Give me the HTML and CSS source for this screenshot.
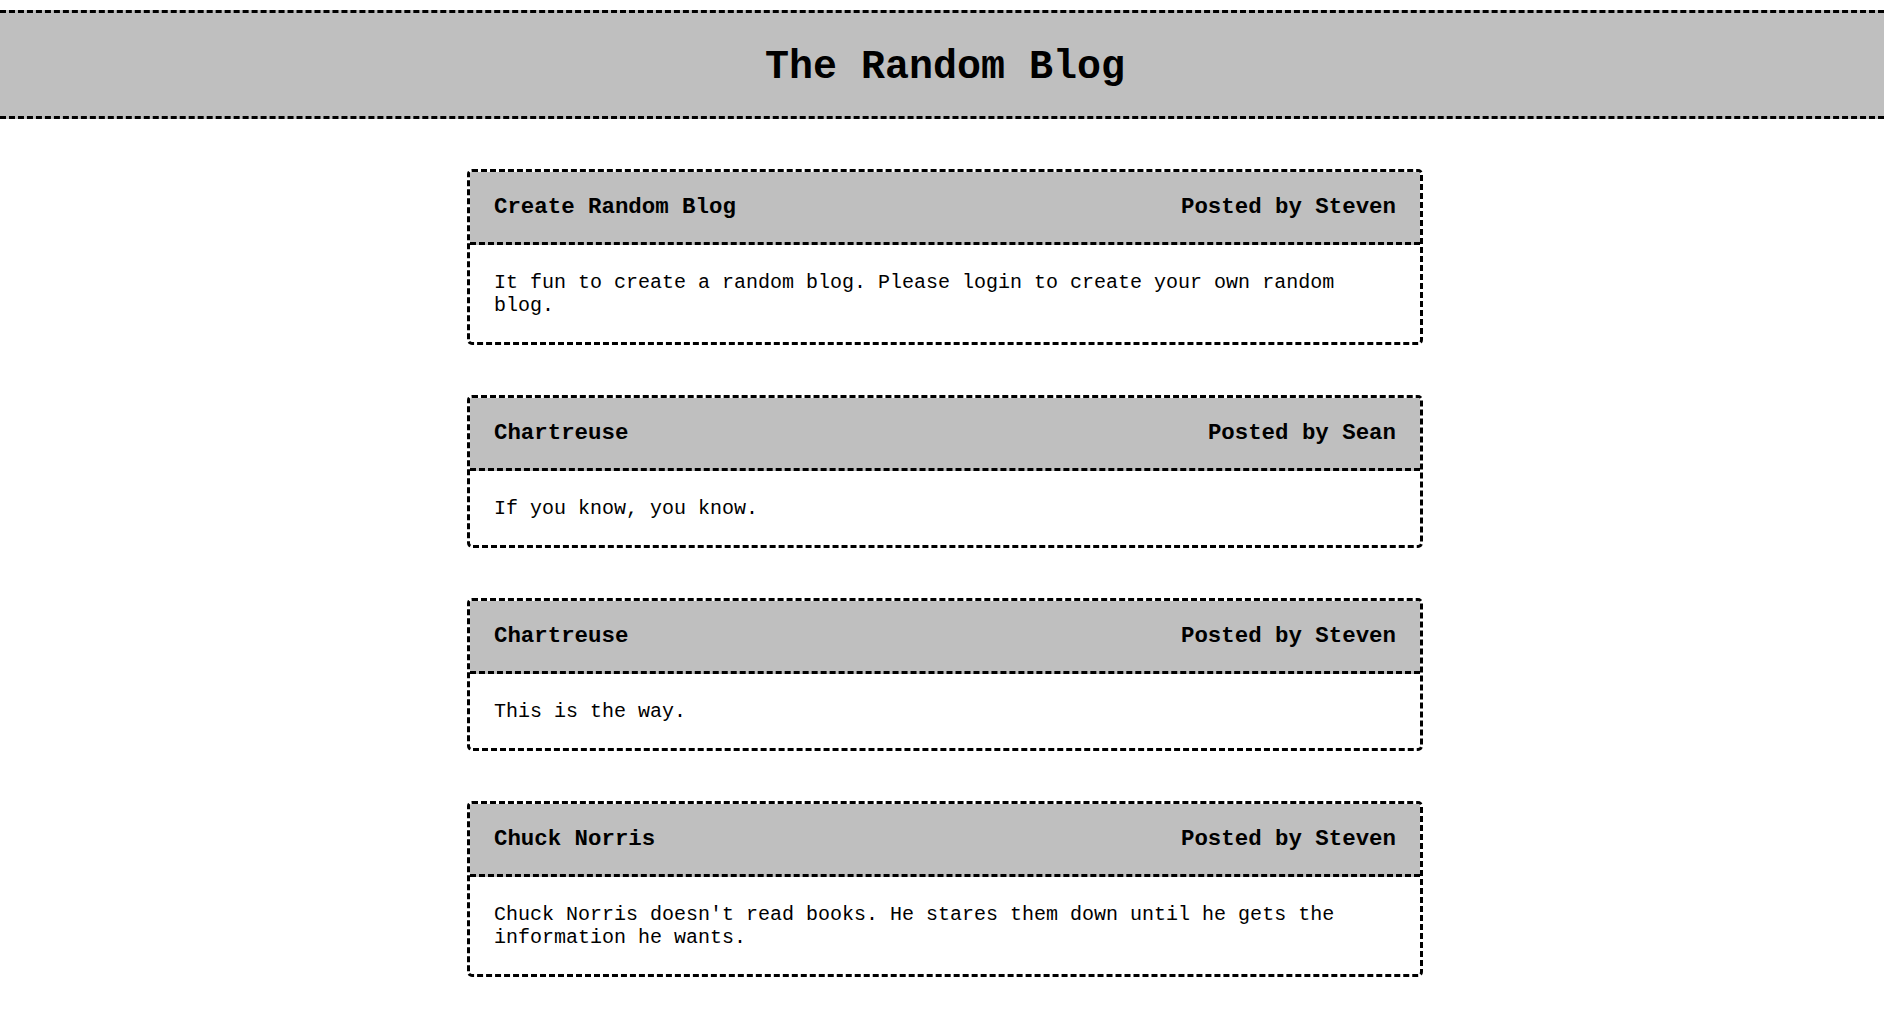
FILE: index.html
```html
<!DOCTYPE html>
<html lang="en">
<head>
<meta charset="utf-8">
<title>The Random Blog</title>
<link rel="stylesheet" href="styles.css">
</head>
<body>
<header class="site-header">
  <h1 class="site-title">The Random Blog</h1>
</header>
<main class="posts">
  <article class="post">
    <div class="post-head">
      <h2 class="post-title">Create Random Blog</h2>
      <span class="post-author">Posted by Steven</span>
    </div>
    <div class="post-body">It fun to create a random blog. Please login to create your own random blog.</div>
  </article>
  <article class="post">
    <div class="post-head">
      <h2 class="post-title">Chartreuse</h2>
      <span class="post-author">Posted by Sean</span>
    </div>
    <div class="post-body">If you know, you know.</div>
  </article>
  <article class="post">
    <div class="post-head">
      <h2 class="post-title">Chartreuse</h2>
      <span class="post-author">Posted by Steven</span>
    </div>
    <div class="post-body">This is the way.</div>
  </article>
  <article class="post">
    <div class="post-head">
      <h2 class="post-title">Chuck Norris</h2>
      <span class="post-author">Posted by Steven</span>
    </div>
    <div class="post-body">Chuck Norris doesn't read books. He stares them down until he gets the information he wants.</div>
  </article>
</main>
</body>
</html>
```
FILE: styles.css
```css
html, body {
  margin: 0;
  padding: 0;
  background: #ffffff;
}

body {
  font-family: "Courier New", "Nimbus Mono PS", "Nimbus Mono L", "FreeMono", "Liberation Mono", monospace;
  color: #000;
}

.site-header {
  margin-top: 10px;
  background: #bfbfbf;
  border-top: 3px dashed #000;
  border-bottom: 3px dashed #000;
  padding: 32px 0 26px 6px;
  text-align: center;
}

.site-title {
  margin: 0;
  font-size: 40px;
  font-weight: bold;
  line-height: 45px;
}

.posts {
  display: flex;
  flex-direction: column;
  align-items: center;
  gap: 50px;
  padding: 50px 0 30px 6px;
}

.post {
  width: 950px;
  border: 3px dashed #000;
  border-radius: 5px;
  overflow: hidden;
}

.post-head {
  display: flex;
  justify-content: space-between;
  align-items: center;
  background: #bfbfbf;
  padding: 22px 24px;
  border-bottom: 3px dashed #000;
}

.post-title,
.post-author {
  margin: 0;
  font-size: 22.4px;
  font-weight: bold;
  line-height: 26px;
}

.post-body {
  padding: 26px 24px 25px;
  font-size: 20px;
  line-height: 23px;
}
```
